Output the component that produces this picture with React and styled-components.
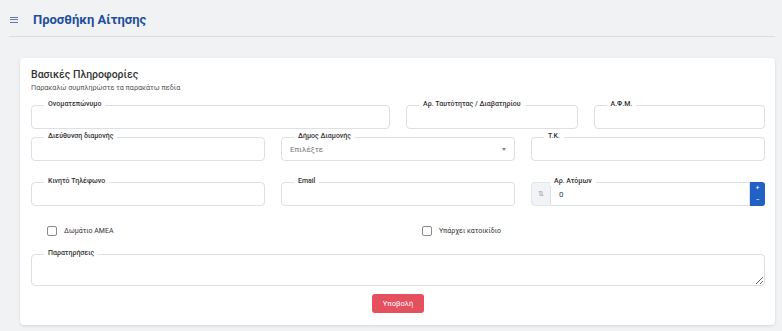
import React from "react";
import styled, { createGlobalStyle } from "styled-components";

const GlobalStyle = createGlobalStyle`
  * { box-sizing: border-box; }
  body {
    margin: 0;
    background: #f1f2f4;
    font-family: Roboto, "Noto Sans", sans-serif;
  }
`;

function App() {
  return (
    <>
      <GlobalStyle />
      <Page>
        <Header>
          <Burger>
            <span />
            <span />
            <span />
          </Burger>
          <PageTitle>Προσθήκη Αίτησης</PageTitle>
        </Header>
        <Card>
          <CardTitle>Βασικές Πληροφορίες</CardTitle>
          <CardSub>Παρακαλώ συμπληρώστε τα παρακάτω πεδία</CardSub>

          <Row top={12}>
            <Field span={6} label="Ονοματεπώνυμο" />
            <Field span={3} label="Αρ. Ταυτότητας / Διαβατηρίου" />
            <Field span={3} label="Α.Φ.Μ." />
          </Row>

          <Row top={8}>
            <Field span={4} label="Διεύθυνση διαμονής" />
            <Wrap span={4}>
              <Label>Δήμος Διαμονής</Label>
              <SelectBox>
                <Placeholder>Επιλέξτε</Placeholder>
                <Caret />
              </SelectBox>
            </Wrap>
            <Field span={4} label="Τ.Κ." />
          </Row>

          <Row top={21}>
            <Field span={4} label="Κινητό Τηλέφωνο" />
            <Field span={4} label="Email" />
            <Group>
              <Prepend>⇅</Prepend>
              <Wrap>
                <Label left={0}>Αρ. Ατόμων</Label>
                <NumberBox>0</NumberBox>
              </Wrap>
              <Spinner>
                <span>+</span>
                <span>−</span>
              </Spinner>
            </Group>
          </Row>

          <Row top={20}>
            <Check>
              <Box />
              Δωμάτιο ΑΜΕΑ
            </Check>
            <Check>
              <Box />
              Υπάρχει κατοικίδιο
            </Check>
          </Row>

          <Row top={18}>
            <Wrap span={12}>
              <Label>Παρατηρήσεις</Label>
              <TextArea />
            </Wrap>
          </Row>

          <Actions>
            <Submit>Υποβολή</Submit>
          </Actions>
        </Card>
      </Page>
    </>
  );
}

function Field({ label, span }) {
  return (
    <Wrap span={span}>
      <Label>{label}</Label>
      <Input />
    </Wrap>
  );
}

export default App;

const Page = styled.div`
  padding: 0 7px 8px 9px;
`;

const Header = styled.div`
  display: flex;
  align-items: center;
  gap: 15px;
  height: 37px;
  padding: 3px 0 0 1px;
  border-bottom: 1px solid #d9dce1;
`;

const Burger = styled.div`
  display: flex;
  flex-direction: column;
  gap: 1.5px;
  width: 8px;
  span {
    display: block;
    height: 1px;
    background: #5f79a8;
  }
`;

const PageTitle = styled.h1`
  margin: 0;
  font-size: 13px;
  font-weight: 700;
  color: #1f4f9e;
`;

const Card = styled.div`
  margin: 21px 0 0 11px;
  background: #fff;
  border-radius: 4px;
  box-shadow: 0 1px 3px rgba(0, 0, 0, 0.12);
  padding: 9px 10px 12px 11px;
`;

const CardTitle = styled.h2`
  margin: 0;
  font-size: 10.5px;
  line-height: 16px;
  font-weight: 500;
  color: #333;
`;

const CardSub = styled.p`
  margin: 0;
  font-size: 7.2px;
  line-height: 10px;
  color: #555;
`;

const Row = styled.div`
  display: grid;
  grid-template-columns: repeat(12, 1fr);
  column-gap: 16px;
  margin-top: ${(p) => p.top}px;
`;

const Wrap = styled.div`
  position: relative;
  flex: 1;
  grid-column: ${(p) => (p.span ? `span ${p.span}` : "auto")};
`;

const Label = styled.span`
  position: absolute;
  top: -5px;
  left: ${(p) => (p.left !== undefined ? p.left : 13)}px;
  padding: 0 4px;
  background: #fff;
  font-size: 7px;
  line-height: 9px;
  font-weight: 500;
  color: #333;
  white-space: nowrap;
`;

const Input = styled.div`
  height: 24px;
  border: 1px solid #dcdfe3;
  border-radius: 4px;
`;

const SelectBox = styled.div`
  height: 24px;
  border: 1px solid #dcdfe3;
  border-radius: 4px;
  display: flex;
  align-items: center;
  justify-content: space-between;
  padding: 0 8px 0 8px;
`;

const Placeholder = styled.span`
  font-size: 8px;
  color: #777;
`;

const Caret = styled.span`
  width: 0;
  height: 0;
  border-left: 2.5px solid transparent;
  border-right: 2.5px solid transparent;
  border-top: 3px solid #888;
`;

const Group = styled.div`
  grid-column: span 4;
  display: flex;
  height: 24px;
`;

const Prepend = styled.div`
  width: 19px;
  display: flex;
  align-items: center;
  justify-content: center;
  background: #f1f3f6;
  border: 1px solid #e4e6ea;
  border-right: none;
  border-radius: 4px 0 0 4px;
  font-size: 7px;
  color: #999;
`;

const NumberBox = styled.div`
  height: 24px;
  border: 1px solid #dcdfe3;
  display: flex;
  align-items: center;
  padding-left: 8px;
  font-size: 8px;
  color: #444;
`;

const Spinner = styled.div`
  width: 15px;
  display: flex;
  flex-direction: column;
  background: #2160c4;
  border-radius: 0 3px 3px 0;
  span {
    flex: 1;
    display: flex;
    align-items: center;
    justify-content: center;
    color: #fff;
    font-size: 7px;
    line-height: 1;
  }
`;

const Check = styled.label`
  grid-column: span 6;
  display: flex;
  align-items: center;
  gap: 7px;
  padding-left: 16px;
  font-size: 7px;
  color: #333;
`;

const Box = styled.span`
  width: 10px;
  height: 10px;
  border: 1px solid #8a8a8a;
  border-radius: 2px;
  background: #fff;
`;

const TextArea = styled.textarea`
  display: block;
  width: 100%;
  height: 32px;
  border: 1px solid #dcdfe3;
  border-radius: 4px;
  resize: vertical;
`;

const Actions = styled.div`
  display: flex;
  justify-content: center;
  margin-top: 8px;
`;

const Submit = styled.button`
  width: 52px;
  height: 19px;
  border: none;
  border-radius: 3px;
  background: #e4505d;
  color: #fff;
  font-family: Roboto, sans-serif;
  font-size: 7.5px;
  padding: 0;
`;
